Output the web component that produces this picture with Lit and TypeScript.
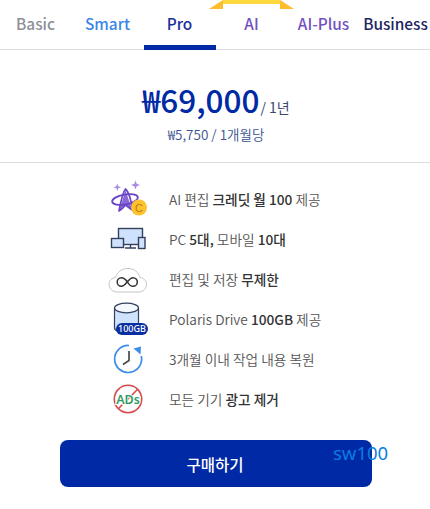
import { LitElement, html, css, svg } from "lit";
import { customElement } from "lit/decorators.js";

const wrap = (c: unknown) => svg`<svg viewBox="0 0 44 40" width="44" height="40" fill="none">${c}</svg>`;

const icons = [
  wrap(svg`
    <path d="M9.300 4.500l1 2.800 2.800 1-2.800 1-1 2.800-1-2.800-2.800-1 2.800-1z" fill="#a98be2"/>
    <path d="M27.500 1.500l1.200 3.300 3.300 1.200-3.300 1.200-1.200 3.300-1.200-3.300-3.300-1.200 3.300-1.200z" fill="#a98be2"/>
    <path d="M17.500 11.500l6.500 19-6.500-4.500-6.500 6z" fill="#8a68d8"/>
    <path d="M17.500 10c-2.500 3-5 14-6.500 22 3-2 5-4 6.500-6 2.500 2 5 4 7 5-1-7-3.500-18-7-21z" stroke="#6a45c6" stroke-width="1.700" stroke-linejoin="round"/>
    <ellipse cx="17" cy="20.500" rx="13" ry="5" stroke="#6a45c6" stroke-width="1.800" transform="rotate(-10 17 20.500)"/>
    <circle cx="31" cy="28.500" r="8" fill="#fcc22f"/>
    <text x="31" y="32.500" text-anchor="middle" font-size="11" font-family="Liberation Sans" fill="#b9790a">C</text>`),
  wrap(svg`<g stroke="#33415c" stroke-width="1.400">
    <rect x="10.500" y="9.500" width="24" height="16" fill="#cfe2fd"/>
    <path d="M22.500 25.500v3M17 29h11"/>
    <rect x="3.500" y="19.500" width="12" height="9" fill="#cfe2fd"/>
    <rect x="30.500" y="18.500" width="6.500" height="11" fill="#cfe2fd"/></g>`),
  wrap(svg`
    <path d="M9.500 33C4.500 33 1 29.500 1 25.500c0-4 3-6.800 6.500-7C9 13 14 9.500 20 9.500c6 0 10.500 3.500 12 9 3.500.2 6.500 3 6.500 7s-3.500 7.500-8 7.500z" stroke="#c4c4c4" stroke-width="1" fill="#fff"/>
    <path d="M19.500 23c-2-2.800-3.800-4.300-6-4.300-2.500 0-4.300 2-4.300 4.300s1.800 4.300 4.300 4.300c4 0 7-8.600 11.500-8.600 2.500 0 4.300 2 4.300 4.300s-1.800 4.300-4.300 4.300c-2.200 0-4-1.500-5.500-4.300z" stroke="#333" stroke-width="1.500"/>`),
  wrap(svg`
    <path d="M6.500 9v20c0 3 6 4.500 12 4.500s12-1.500 12-4.500V9" fill="#cfe2fd" stroke="#33415c" stroke-width="1.200"/>
    <ellipse cx="18.500" cy="9" rx="12" ry="4.800" fill="#f4f8ff" stroke="#33415c" stroke-width="1.200"/>
    <rect x="8" y="24" width="32" height="12" rx="6" fill="#0b2fa0"/>
    <text x="24" y="33" text-anchor="middle" font-size="9" font-family="Noto Sans" font-weight="500" fill="#fff">100GB</text>`),
  wrap(svg`
    <path d="M21 6.500A13.500 13.500 0 1 0 33.300 17" stroke="#3d8ee8" stroke-width="1.700"/>
    <path d="M25.500 9.500l7.500-2-.5 8z" fill="#3d8ee8"/>
    <path d="M21 12v9.500l-6 4" stroke="#4a4a4a" stroke-width="1.700"/>`),
  wrap(svg`
    <circle cx="20" cy="20" r="13.700" stroke="#d84a4a" stroke-width="1.600"/>
    <path d="M29.700 10.300L10.300 29.700" stroke="#d84a4a" stroke-width="1.600"/>
    <text x="20" y="24.500" text-anchor="middle" font-size="12.500" font-family="Noto Sans" font-weight="600" fill="#2f9a63" stroke="#fff" stroke-width="2" paint-order="stroke">ADs</text>`),
];

@customElement("app-root")
export class AppRoot extends LitElement {
  static styles = css`
    :host {
      display: block;
      width: 430px;
      height: 509px;
      overflow: hidden;
      position: relative;
      background: #fff;
      font-family: "Noto Sans CJK KR", "Noto Sans", sans-serif;
      color: #333;
    }
    .tabs {
      display: grid;
      grid-template-columns: repeat(6, 72px);
      height: 50px;
      border-bottom: 1px solid #ddd;
      box-sizing: border-box;
      position: relative;
    }
    .crown {
      position: absolute;
      left: 209px;
      top: 0;
      width: 85px;
      height: 9px;
      background: linear-gradient(90deg, #fdbb2d 0 17%, #ffd83d 17% 83%, #fdbb2d 83% 100%);
      clip-path: polygon(0 100%, 14px 0, 71px 0, 100% 100%, 71px 100%, 71px 4px, 14px 4px, 14px 100%);
    }
    .tab {
      display: flex;
      align-items: center;
      justify-content: center;
      padding: 0 1px 3px 0;
      box-sizing: border-box;
      height: 49px;
      font-size: 15.400px;
      font-weight: 500;
      white-space: nowrap;
      position: relative;
    }
    .basic { color: #8b8f98; }
    .smart { color: #3b86e6; }
    .pro { color: #1b2f9c; }
    .ai { color: #7350c4; }
    .biz { color: #1e2560; }
    .pro::after {
      content: "";
      position: absolute;
      left: 0;
      right: 0;
      bottom: -1px;
      height: 5px;
      background: #0029a5;
    }
    .price {
      display: flex;
      flex-direction: column;
      align-items: center;
      height: 113px;
      border-bottom: 1px solid #ddd;
      box-sizing: border-box;
      padding: 26px 0 0 2px;
    }
    .main {
      display: flex;
      align-items: baseline;
      color: #0029a5;
      line-height: 46px;
      height: 46px;
    }
    .amt { font-size: 31.500px; font-weight: 500; }
    .per { font-size: 14px; color: #3a4a70; margin-left: 1px; }
    .sub { font-size: 13.500px; font-weight: 350; color: #3a5290; line-height: 20px; margin-top: 2px; }
    .list {
      list-style: none;
      margin: 0;
      padding: 16px 0 0 108px;
      display: flex;
      flex-direction: column;
    }
    .list li {
      display: flex;
      align-items: center;
      height: 40px;
      gap: 17px;
      font-size: 13.700px;
      font-weight: 350;
      color: #555;
    }
    .list b { font-weight: 500; color: #333; }
    .list svg { display: block; flex: none; overflow: visible; }
    .buy {
      display: flex;
      align-items: center;
      justify-content: center;
      margin: 21px 0 0 60px;
      width: 312px;
      height: 47px;
      border: 0;
      padding: 0 2px 0 0;
      border-radius: 8px;
      background: #0029a5;
      color: #fff;
      font: 500 15.500px "Noto Sans CJK KR", sans-serif;
    }
    .tag {
      position: absolute;
      left: 333px;
      top: 441px;
      font: 18.500px/24px "Noto Sans", sans-serif;
      color: #0b7de2;
    }
  `;

  render() {
    return html`
      <nav class="tabs">
        <div class="crown"></div>
        <div class="tab basic">Basic</div>
        <div class="tab smart">Smart</div>
        <div class="tab pro">Pro</div>
        <div class="tab ai">AI</div>
        <div class="tab ai">AI-Plus</div>
        <div class="tab biz">Business</div>
      </nav>
      <section class="price">
        <div class="main"><span class="amt">₩69,000</span><span class="per">/ 1년</span></div>
        <div class="sub">₩5,750 / 1개월당</div>
      </section>
      <ul class="list">
        <li>${icons[0]}<span>AI 편집 <b>크레딧 월 100</b> 제공</span></li>
        <li>${icons[1]}<span>PC <b>5대,</b> 모바일 <b>10대</b></span></li>
        <li>${icons[2]}<span>편집 및 저장 <b>무제한</b></span></li>
        <li>${icons[3]}<span>Polaris Drive <b>100GB</b> 제공</span></li>
        <li>${icons[4]}<span>3개월 이내 작업 내용 복원</span></li>
        <li>${icons[5]}<span>모든 기기 <b>광고 제거</b></span></li>
      </ul>
      <button class="buy">구매하기</button>
      <div class="tag">sw100</div>
    `;
  }
}
